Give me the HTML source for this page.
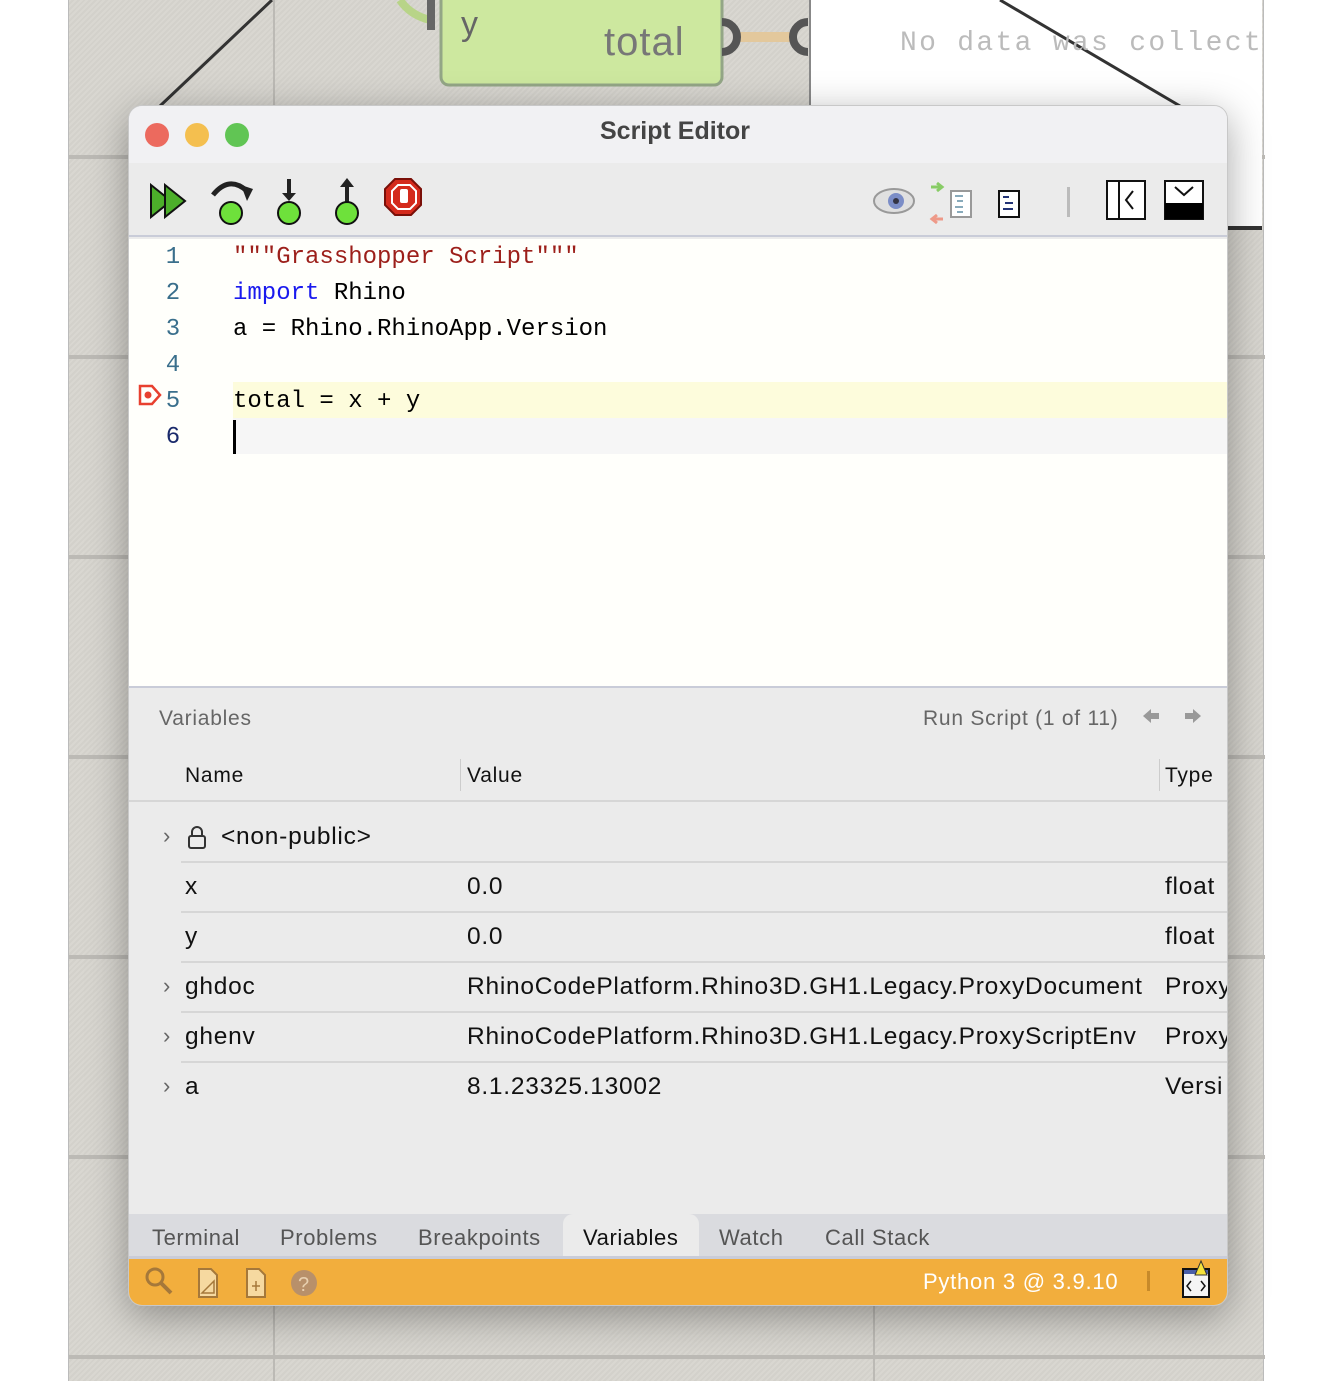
<!DOCTYPE html>
<html><head><meta charset="utf-8"><style>
*{margin:0;padding:0;box-sizing:border-box}
body{width:1340px;height:1381px;position:relative;overflow:hidden;background:#fff;font-family:"Liberation Sans",sans-serif}
.abs{position:absolute}
.canvas{left:68px;top:0;width:1196px;height:1381px;background:repeating-linear-gradient(135deg,#d9d7d1 0 2px,#d3d1cb 2px 4px);border-left:1px solid #bbb;border-right:1px solid #bbb}
.hl{position:absolute;left:0;width:1196px;height:4px;background:#bcbab5}
.vl{position:absolute;top:0;width:2px;height:1381px;background:#bcbab5}
.mono{font-family:"Liberation Mono",monospace}
.win{left:128px;top:105px;width:1100px;height:1201px;border-radius:14px;overflow:hidden;background:#ebebeb;box-shadow:0 10px 40px rgba(0,0,0,.35);border:1px solid #c8c8c8}
.ln{position:absolute;left:32px;width:24px;text-align:center;font-size:24px;color:#3a6f8c}
.code{position:absolute;left:104px;font-size:24px;color:#000;white-space:pre}
.cell{position:absolute;font-size:24.5px;letter-spacing:0.75px;color:#111;white-space:nowrap}
.sep{position:absolute;left:52px;right:0;height:2px;background:#d6d6d6}
.chev{position:absolute;left:34px;font-size:22px;color:#666}
.tab{position:absolute;top:1119px;font-size:22px;letter-spacing:0.6px;color:#555}
</style></head><body>
<div class="abs canvas">
<div class="hl" style="top:155px"></div><div class="hl" style="top:355px"></div><div class="hl" style="top:555px"></div><div class="hl" style="top:755px"></div><div class="hl" style="top:955px"></div><div class="hl" style="top:1155px"></div><div class="hl" style="top:1355px"></div>
<div class="vl" style="left:204px"></div><div class="vl" style="left:804px"></div>
</div>
<svg class="abs" style="left:0;top:0" width="1340" height="240">
<rect x="810" y="0" width="452" height="228" fill="#fff"/>
<line x1="810" y1="0" x2="810" y2="228" stroke="#888" stroke-width="2"/>
<rect x="1228" y="226" width="34" height="4" fill="#333"/>
<line x1="160" y1="106" x2="272" y2="0" stroke="#333" stroke-width="3"/>
<line x1="1000" y1="0" x2="1180" y2="106" stroke="#333" stroke-width="3"/>
<rect x="441" y="-20" width="281" height="105" rx="8" fill="#cde89f" stroke="#93a686" stroke-width="3"/>
<path d="M400 0 Q410 15 430 20" stroke="#b8d488" stroke-width="8" fill="none"/>
<rect x="738" y="32" width="56" height="10" fill="#e3c89c"/>
<path d="M431 0 v30" stroke="#666" stroke-width="8" fill="none"/>
<path d="M722 22 a14 14 0 0 1 0 30" stroke="#555" stroke-width="8" fill="none"/>
<path d="M808 22 a14 14 0 0 0 0 30" stroke="#555" stroke-width="8" fill="none"/>
<text x="461" y="35" font-family="Liberation Sans" font-size="34" fill="#666">y</text>
<text x="604" y="55" font-family="Liberation Sans" font-size="40" letter-spacing="1" fill="#777">total</text>
<text x="900" y="50" font-family="Liberation Mono" font-size="28" letter-spacing="2.3" fill="#bbb">No data was collect</text>
</svg>
<div class="abs win">
<div class="abs" style="left:0;top:0;width:1100px;height:57px;background:#f1f1f3"></div>
<div class="abs" style="left:16px;top:17px;width:24px;height:24px;border-radius:50%;background:#ec6a5e"></div>
<div class="abs" style="left:56px;top:17px;width:24px;height:24px;border-radius:50%;background:#f4bf4f"></div>
<div class="abs" style="left:96px;top:17px;width:24px;height:24px;border-radius:50%;background:#61c554"></div>
<div class="abs" style="left:-4px;top:11px;width:1100px;text-align:center;font-size:25px;font-weight:bold;color:#444">Script Editor</div>
<div class="abs" style="left:0;top:57px;width:1100px;height:74px;background:#ebebeb;border-bottom:2px solid #c9ccd8"></div>
<svg class="abs" style="left:0;top:57px" width="1100" height="74">
<path d="M22 22 l20 16 l-20 16z" fill="#4caf2a" stroke="#111" stroke-width="2"/><path d="M36 22 l20 16 l-20 16z" fill="#4caf2a" stroke="#111" stroke-width="2"/>
<path d="M84 32 q16 -20 34 -4" stroke="#222" stroke-width="5" fill="none"/><path d="M112 22 l12 4 l-6 12z" fill="#222"/>
<ellipse cx="102" cy="50" rx="11" ry="11" fill="#6ee13b" stroke="#111" stroke-width="2"/>
<path d="M160 16 v16" stroke="#222" stroke-width="4"/><path d="M153 30 h14 l-7 8z" fill="#222"/><ellipse cx="160" cy="50" rx="11" ry="11" fill="#6ee13b" stroke="#111" stroke-width="2"/>
<path d="M218 22 v18" stroke="#222" stroke-width="4"/><path d="M211 24 h14 l-7 -9z" fill="#222"/><ellipse cx="218" cy="50" rx="11" ry="11" fill="#6ee13b" stroke="#111" stroke-width="2"/>
<path d="M266 16 h16 l10 10 v16 l-10 10 h-16 l-10 -10 v-16z" fill="#d42a1c" stroke="#7a0f08" stroke-width="2"/><path d="M269 22 h12 l6 6 v12 l-6 6 h-12 l-6 -6 v-12z" fill="none" stroke="#fff" stroke-width="2"/><rect x="271" y="26" width="8" height="14" rx="2" fill="#fff"/>
<ellipse cx="765" cy="38" rx="20" ry="12" fill="#e0e0e0" stroke="#999" stroke-width="2"/><circle cx="767" cy="38" r="8" fill="#7b8dc7"/><circle cx="767" cy="38" r="3" fill="#334"/>
<rect x="822" y="28" width="20" height="26" fill="#fff" stroke="#999" stroke-width="2"/><path d="M826 33h8M828 38h6M826 44h8M828 49h6" stroke="#8ab" stroke-width="2"/><path d="M802 24 h10 M808 20 l5 4 l-5 4" stroke="#8c6" stroke-width="3" fill="none"/><path d="M814 56 h-10 M808 52 l-5 4 l5 4" stroke="#e98" stroke-width="3" fill="none"/>
<rect x="870" y="28" width="20" height="26" fill="#fff" stroke="#111" stroke-width="2"/><path d="M874 34h6M876 40h8M874 46h10" stroke="#237" stroke-width="2"/>
<rect x="938" y="24" width="3" height="30" fill="#bbb"/>
<rect x="978" y="18" width="38" height="38" fill="#fff" stroke="#111" stroke-width="2"/><path d="M990 18 v38 M1004 28 l-7 9 l7 9" stroke="#111" stroke-width="2" fill="none"/>
<rect x="1036" y="18" width="38" height="38" fill="#fff" stroke="#111" stroke-width="2"/><rect x="1036" y="40" width="38" height="16" fill="#000"/><path d="M1046 24 l9 8 l9 -8" stroke="#111" stroke-width="2" fill="none"/>
</svg>
<div class="abs mono" style="left:0;top:133px;width:1100px;height:448px;background:#fffffb">
<div class="abs" style="left:104px;top:143px;width:996px;height:36px;background:#fdfcdc"></div>
<div class="abs" style="left:104px;top:179px;width:996px;height:36px;background:#f6f6f6"></div>
<div class="ln" style="top:5px">1</div><div class="ln" style="top:41px">2</div><div class="ln" style="top:77px">3</div><div class="ln" style="top:113px">4</div><div class="ln" style="top:149px">5</div><div class="ln" style="top:185px;color:#1a2a6b">6</div>
<svg class="abs" style="left:8px;top:144px" width="26" height="26"><path d="M3 3 h12 l8 9 l-8 9 h-12z" fill="none" stroke="#e8402f" stroke-width="2.5"/><circle cx="11" cy="12" r="3.5" fill="#e8402f"/></svg>
<div class="code" style="top:5px;color:#9c1f1a">"""Grasshopper Script"""</div>
<div class="code" style="top:41px"><span style="color:#1a1aee">import</span> Rhino</div>
<div class="code" style="top:77px">a = Rhino.RhinoApp.Version</div>
<div class="code" style="top:149px">total = x + y</div>
<div class="abs" style="left:104px;top:181px;width:3px;height:34px;background:#000"></div>
</div>
<div class="abs" style="left:0;top:580px;width:1100px;height:2px;background:#c9ccd8"></div>
<div class="cell" style="left:30px;top:601px;font-size:21px;color:#666">Variables</div>
<div class="cell" style="left:794px;top:601px;font-size:21px;color:#666">Run Script (1 of 11)</div>
<svg class="abs" style="left:1010px;top:598px" width="70" height="24"><path d="M4 12 l8 -7 v4 h8 v6 h-8 v4z" fill="#999"/><path d="M62 12 l-8 -7 v4 h-8 v6 h8 v4z" fill="#999"/></svg>
<div class="cell" style="left:56px;top:658px;font-size:21px">Name</div>
<div class="abs" style="left:331px;top:653px;width:1px;height:32px;background:#ccc"></div>
<div class="cell" style="left:338px;top:658px;font-size:21px">Value</div>
<div class="abs" style="left:1030px;top:653px;width:1px;height:32px;background:#ccc"></div>
<div class="cell" style="left:1036px;top:658px;font-size:21px">Type</div>
<div class="abs" style="left:0;top:694px;width:1100px;height:2px;background:#d6d6d6"></div>
<div class="chev" style="top:717px">›</div>
<svg class="abs" style="left:58px;top:718px" width="20" height="26"><path d="M5 12 v-4 a5 5 0 0 1 10 0 v4" stroke="#333" stroke-width="2" fill="none"/><rect x="2" y="12" width="16" height="12" rx="2" fill="none" stroke="#333" stroke-width="2"/></svg>
<div class="cell" style="left:92px;top:717px">&lt;non-public&gt;</div>
<div class="sep" style="top:755px"></div>
<div class="cell" style="left:56px;top:767px">x</div><div class="cell" style="left:338px;top:767px">0.0</div><div class="cell" style="left:1036px;top:767px">float</div>
<div class="sep" style="top:805px"></div>
<div class="cell" style="left:56px;top:817px">y</div><div class="cell" style="left:338px;top:817px">0.0</div><div class="cell" style="left:1036px;top:817px">float</div>
<div class="sep" style="top:855px"></div>
<div class="chev" style="top:867px">›</div><div class="cell" style="left:56px;top:867px">ghdoc</div><div class="cell" style="left:338px;top:867px">RhinoCodePlatform.Rhino3D.GH1.Legacy.ProxyDocument</div><div class="cell" style="left:1036px;top:867px">Proxy</div>
<div class="sep" style="top:905px"></div>
<div class="chev" style="top:917px">›</div><div class="cell" style="left:56px;top:917px">ghenv</div><div class="cell" style="left:338px;top:917px">RhinoCodePlatform.Rhino3D.GH1.Legacy.ProxyScriptEnv</div><div class="cell" style="left:1036px;top:917px">Proxy</div>
<div class="sep" style="top:955px"></div>
<div class="chev" style="top:967px">›</div><div class="cell" style="left:56px;top:967px">a</div><div class="cell" style="left:338px;top:967px">8.1.23325.13002</div><div class="cell" style="left:1036px;top:967px">Versi</div>
<div class="abs" style="left:0;top:1108px;width:1100px;height:44px;background:#dadbdf"></div>
<div class="abs" style="left:434px;top:1108px;width:136px;height:46px;background:#ebebeb;border-radius:10px 10px 0 0"></div>
<div class="tab" style="left:23px">Terminal</div><div class="tab" style="left:151px">Problems</div><div class="tab" style="left:289px">Breakpoints</div><div class="tab" style="left:454px;color:#111">Variables</div><div class="tab" style="left:590px">Watch</div><div class="tab" style="left:696px">Call Stack</div>
<div class="abs" style="left:0;top:1150px;width:1100px;height:3px;background:#c9ccd8"></div>
<div class="abs" style="left:0;top:1153px;width:1100px;height:48px;background:#f2ae3d"></div>
<svg class="abs" style="left:0;top:1153px" width="1100" height="48">
<circle cx="26" cy="18" r="8" fill="none" stroke="#a5783a" stroke-width="3"/><path d="M32 24 l10 10" stroke="#a5783a" stroke-width="4"/>
<path d="M70 10 h12 l6 6 v22 h-18z" fill="#f6d9a0" stroke="#a5783a" stroke-width="2"/><path d="M73 34 l12 -12 v12z" fill="none" stroke="#a5783a" stroke-width="1.5"/>
<path d="M118 10 h12 l6 6 v22 h-18z" fill="#f6d9a0" stroke="#a5783a" stroke-width="2"/><path d="M127 22 v10 M123 27 h8" stroke="#a5783a" stroke-width="1.5"/>
<circle cx="175" cy="24" r="13" fill="#b8906a"/><text x="169" y="32" font-family="Liberation Sans" font-size="20" fill="#e8d0b0">?</text>
<rect x="1018" y="12" width="3" height="20" fill="#c78a2a"/>
<rect x="1054" y="10" width="26" height="28" fill="#f4f4f4" stroke="#111" stroke-width="2"/><rect x="1055" y="11" width="24" height="4" fill="#4a5fa8"/><path d="M1062 22 l-4 5 l4 5 M1072 22 l4 5 l-4 5" stroke="#111" stroke-width="1.5" fill="none"/><path d="M1072 2 l6 14 h-12z" fill="#f5e23a" stroke="#333" stroke-width="1"/>
</svg>
<div class="cell" style="left:794px;top:1163px;font-size:22px;color:#fff">Python 3 @ 3.9.10</div>
</div>
</body></html>
